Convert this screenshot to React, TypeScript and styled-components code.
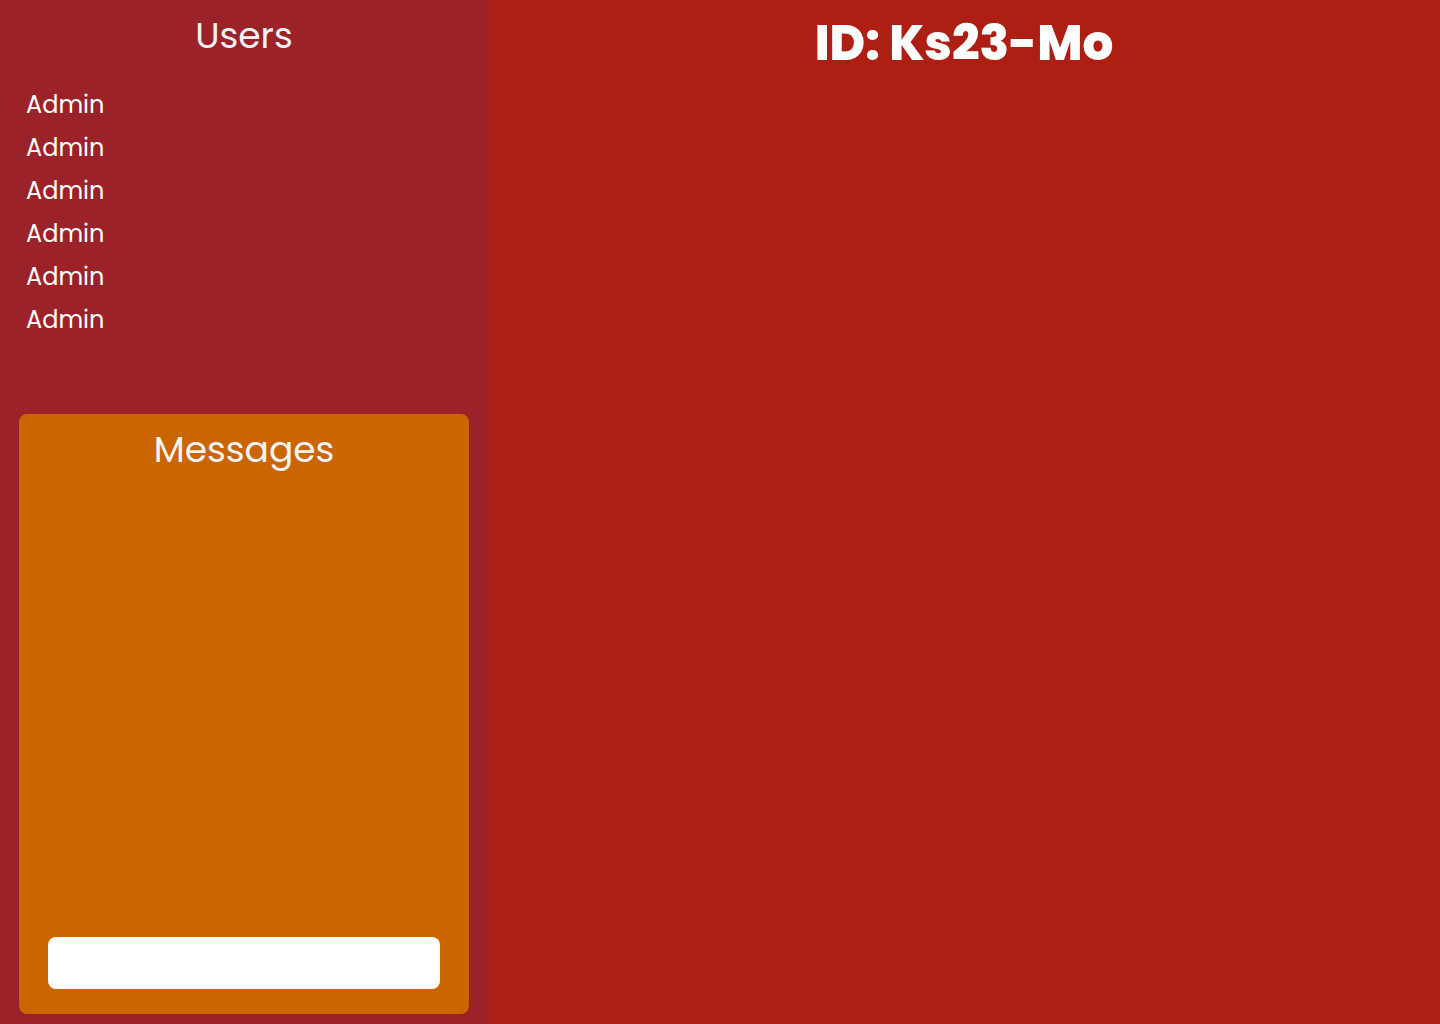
import React from 'react';
import styled, { createGlobalStyle } from 'styled-components';

const GlobalStyle = createGlobalStyle`
  html, body, #root {
    margin: 0;
    padding: 0;
    height: 100%;
  }
  body {
    font-family: 'Poppins', 'Open Sans', 'Noto Sans', sans-serif;
    color: #ffffff;
  }
  * {
    box-sizing: border-box;
  }
`;

const Layout = styled.div`
  display: flex;
  width: 1440px;
  height: 1024px;
  overflow: hidden;
`;

const Sidebar = styled.aside`
  width: 488px;
  flex-shrink: 0;
  background: #9b2229;
  display: flex;
  flex-direction: column;
`;

const UsersSection = styled.section`
  flex: 1;
  padding-top: 12px;
`;

const Heading = styled.h2`
  margin: 0;
  text-align: center;
  font-size: 36px;
  font-weight: 400;
  line-height: 48px;
  color: #f3f3f5;
`;

const UserList = styled.ul`
  list-style: none;
  margin: 23px 0 0;
  padding: 0 0 0 26px;
`;

const UserItem = styled.li`
  font-size: 24px;
  font-weight: 400;
  line-height: 43px;
  height: 43px;
`;

const MessagesCard = styled.section`
  height: 600px;
  margin: 0 19px 10px;
  background: #ca6500;
  border-radius: 8px;
  display: flex;
  flex-direction: column;
  padding: 12px 29px 25px;
`;

const MessageList = styled.div`
  flex: 1;
`;

const MessageInput = styled.input`
  height: 52px;
  width: 100%;
  border: none;
  border-radius: 8px;
  background: #ffffff;
  outline: none;
  padding: 0 16px;
  font: inherit;
  font-size: 18px;
`;

const Main = styled.main`
  flex: 1;
  background: #ad1f13;
  padding-top: 14px;
`;

const RoomId = styled.h1`
  margin: 0;
  text-align: center;
  font-size: 48.5px;
  font-weight: 800;
  line-height: 58px;
`;

const users = ['Admin', 'Admin', 'Admin', 'Admin', 'Admin', 'Admin'];

const App = () => (
  <>
    <GlobalStyle />
    <Layout>
      <Sidebar>
        <UsersSection>
          <Heading>Users</Heading>
          <UserList>
            {users.map((u, i) => (
              <UserItem key={i}>{u}</UserItem>
            ))}
          </UserList>
        </UsersSection>
        <MessagesCard>
          <Heading>Messages</Heading>
          <MessageList />
          <MessageInput type="text" />
        </MessagesCard>
      </Sidebar>
      <Main>
        <RoomId>ID: Ks23-Mo</RoomId>
      </Main>
    </Layout>
  </>
);

export default App;
